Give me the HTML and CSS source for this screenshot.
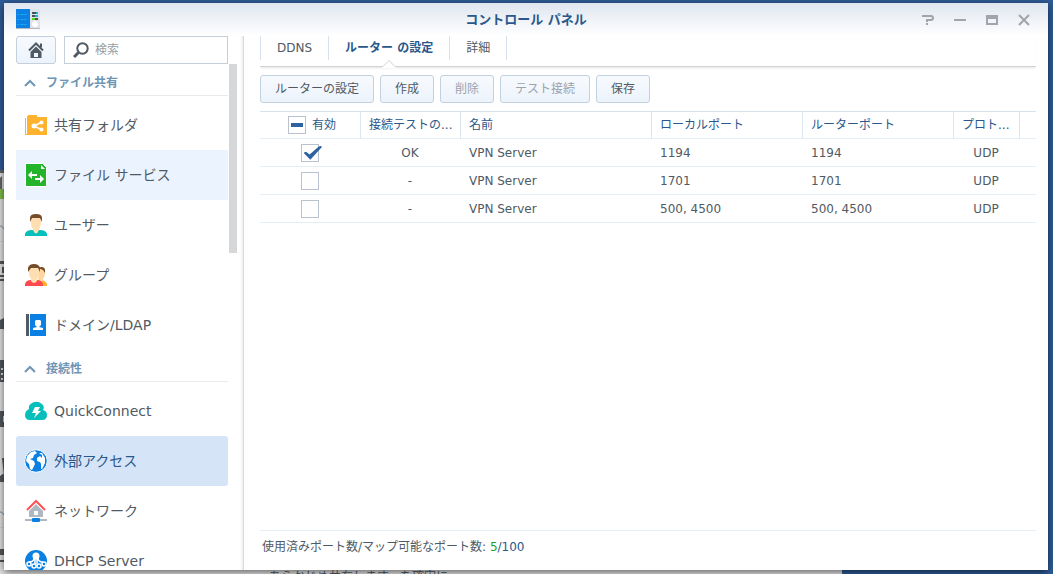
FILE: index.html
```
<!DOCTYPE html>
<html lang="ja">
<head>
<meta charset="utf-8">
<title>コントロール パネル</title>
<link rel="stylesheet" href="styles.css">
</head>
<body>
<div class="backdrop" aria-hidden="true">
  <div class="back-page">
    <svg class="back-icons" width="4" height="400" viewBox="0 0 4 400">
      <path fill="#62676d" d="M0 0h4v3H0zM0 8l2-2v14H0z"/><path fill="#80be4a" d="M0 19h4v10H0z"/>
      <path d="M0 56q2-1 4 3M0 342q2-1 4 3" fill="none" stroke="#7893ab"/>
      <path fill="#d4d4d4" d="M0 71h4v1H0zM0 357h4v1H0z"/>
      <path fill="#53585e" d="M0 91h4v3H0zM2 97h2v6H2zM0 105h4v2H0zM0 109h4v2H0zM0 150l4-2v11H0zM0 190h4v22H0zM0 241h4v16H0zM2 288h2v15l-4 3v6h4v-6zM0 379h4v6H0zM0 390h4v2H0z"/>
      <path fill="#ddd" d="M1 198h2v2H1zM1 203h2v2H1zM1 208h2v2H1zM3 246h1v6H3z"/>
    </svg>
    <p class="back-text">あらかじめ共有します、を確実に</p>
  </div>
</div>
<main class="window">
  <header class="titlebar">
    <svg class="app-icon" width="24" height="21" viewBox="0 0 24 21">
      <path fill="#b5bac0" d="M0 18h24v2H0z"/><path fill="#0d80e3" d="M0 0h14v19H0z"/><path fill="#dfe2e6" d="M14 0h10v19H14z"/>
      <path d="M1 5.500h2M4 5.500h7M1 10.500h2M4 10.500h7M1 15.500h2M4 15.500h7" stroke="#16a4ee"/>
      <path d="M16 4h6M16 7h6M16 10h6" stroke="#47515b" stroke-width="2"/><path d="M20 4h2M19 7h3" stroke="#12b8d4" stroke-width="2"/><path d="M16 10h3" stroke="#53d719" stroke-width="2"/>
      <circle cx="19" cy="15" r="3" fill="#fff"/>
    </svg>
    <h1 class="title">コントロール パネル</h1>
    <div class="window-tools">
      <button class="tool" aria-label="ヘルプ"><svg width="12" height="12" viewBox="0 0 12 12" fill="none" stroke="#a0a5ac" stroke-width="2"><path d="M0 2h9q2 0 2 2t-2 2H5v2M5 9v2" /></svg></button>
      <button class="tool" aria-label="最小化"><svg width="12" height="12" viewBox="0 0 12 12"><path d="M0 5h12v2H0z" fill="#a0a5ac"/></svg></button>
      <button class="tool" aria-label="最大化"><svg width="12" height="12" viewBox="0 0 12 12"><path d="M0 1h12v10H0zM2 5v4h8V5z" fill="#a0a5ac" fill-rule="evenodd"/></svg></button>
      <button class="tool" aria-label="閉じる"><svg width="12" height="12" viewBox="0 0 12 12"><path d="M1 1l10 10M11 1L1 11" stroke="#a0a5ac" stroke-width="2"/></svg></button>
    </div>
  </header>
  <div class="content">
    <aside class="sidebar">
      <div class="search-row">
        <button class="home" aria-label="ホーム"><svg width="16" height="16" viewBox="0 0 16 16"><path d="M1 8.500L8 1.500l7 7" fill="none" stroke="#505a64" stroke-width="2"/><path d="M12 1.500h2v4h-2z" fill="#505a64"/><path fill="#505a64" fill-rule="evenodd" d="M8 4.500L2.500 10v6h11v-6zM6 15v-4h4v4z"/></svg></button>
        <label class="search">
          <svg width="16" height="16" viewBox="0 0 16 16" fill="none" stroke="#505a64"><circle cx="9.500" cy="6.500" r="5.200" stroke-width="2"/><path d="M5.500 10.500L1 15" stroke-width="3"/></svg>
          <input type="search" placeholder="検索" aria-label="検索">
        </label>
      </div>
      <div class="nav-scroll">
        <nav class="nav">
          <h2 class="section"><svg width="12" height="8" viewBox="0 0 12 8"><path d="M1 7l5-5 5 5"/></svg>ファイル共有</h2>
          <ul class="items">
            <li><a class="item" href="#"><svg width="24" height="24" viewBox="0 0 24 24"><path fill="#ffb22e" d="M1 5h1v16h1V3h1v-1h9v2h10v18H1z"/><path fill="#fff" d="M2 4h1v15H2z"/><path d="M18 9l-8 4 8 4" fill="none" stroke="#fff" stroke-width="1.500"/><g fill="#fff"><circle cx="10" cy="13" r="2.500"/><circle cx="17.500" cy="9.500" r="2"/><circle cx="17.500" cy="16.500" r="2"/></g></svg>共有フォルダ</a></li>
            <li><a class="item hovered" href="#"><svg width="24" height="24" viewBox="0 0 24 24"><path fill="#24b42c" stroke="#fff" d="M1.500.5h17l4 4v19h-21z"/><path fill="#fff" d="M17 2l4 4h-4zM4 12l4-4v3h5v2H8v3zM20 16l-4 4v-3h-5v-2h5v-3z"/></svg>ファイル サービス</a></li>
            <li><a class="item" href="#"><svg width="24" height="24" viewBox="0 0 24 24"><path fill="#06bfba" d="M1 23v-2q1-4 7-4h8q6 0 7 4v2z"/><path fill="#ffdeb2" d="M7 5h10v6q-1 4-2 5v1q-3 7-6 0v-1q-2-2-2-5z"/><path fill="#754c29" d="M6 9V5q0-4 6-4t6 4v4l-2-4H8z"/></svg>ユーザー</a></li>
            <li><a class="item" href="#"><svg width="24" height="24" viewBox="0 0 24 24"><path fill="#ffb32e" d="M18 17q4 1 5 4v2h-6z"/><path fill="#ffd6a0" d="M15 5h6v7l-2 4v2l-5 1z"/><path fill="#754c29" d="M14 5q6-3 7 2v3l-2-3z"/><path fill="#ff4b50" d="M1 23v-2q1-4 6-4h6q5 0 6 4v2z"/><path fill="#ffdeb2" d="M5 5h10v6q-1 4-2 5v2q-3 4-6 0v-2q-2-2-2-5z"/><path fill="#754c29" d="M4 9V5q1-4 6-4t6 4v4l-2-4H7z"/></svg>グループ</a></li>
            <li><a class="item" href="#"><svg width="24" height="24" viewBox="0 0 24 24"><path fill="#505b66" d="M2 1h3v22H2z"/><path fill="#0a80e3" d="M6 1h16v22H6z"/><path fill="#fff" d="M12 7h4l1 1v4l-2 2 4 1v2H9v-2l4-1-2-2V8z"/></svg>ドメイン/LDAP</a></li>
          </ul>
          <h2 class="section"><svg width="12" height="8" viewBox="0 0 12 8"><path d="M1 7l5-5 5 5"/></svg>接続性</h2>
          <ul class="items">
            <li><a class="item" href="#"><svg width="24" height="24" viewBox="0 0 24 24"><path fill="#06bfba" d="M6 21q-5 0-5-5 0-4 4-6-1-4 3-6 5-3 10 1 3 3 1 6 4 1 4 5 0 5-5 5z"/><path fill="#fff" d="M11 8h5l-2 4h3l-7 7 2-5H8z"/></svg>QuickConnect</a></li>
            <li><a class="item selected" href="#" aria-current="page"><svg width="24" height="24" viewBox="0 0 24 24"><circle cx="12" cy="12" r="11.300" fill="#0a80e3" stroke="#fff"/><path fill="#fff" d="M3 7l4-4 4-1 2 2-3 2-1 3-3 1 4 2 1 3-3 6-2-1-1-5-3-3zM15 4l3 0 3 5 0 5-3 6-1 0v-5l-1-2-3-1v-3l3-2 2 2V6z"/></svg>外部アクセス</a></li>
            <li><a class="item" href="#"><svg width="24" height="24" viewBox="0 0 24 24"><path fill="#aeb8c3" fill-rule="evenodd" d="M12 5l7 7v6H5v-6zM10 12v4h4v-4z"/><path d="M3 11l9-9 9 9" fill="none" stroke="#ff5054" stroke-width="2"/><path fill="#aeb8c3" d="M1 20h22v2H1z"/><rect x="8" y="19" width="8" height="4" rx="1" fill="#0a80e3"/></svg>ネットワーク</a></li>
            <li><a class="item" href="#"><svg width="24" height="24" viewBox="0 0 24 24"><circle cx="12" cy="12" r="11" fill="#0a80e3"/><g fill="none" stroke="#fff" stroke-width="1.500"><circle cx="5" cy="15" r="2"/><circle cx="10" cy="17" r="2"/><circle cx="15" cy="17" r="2"/><circle cx="20" cy="15" r="2"/><path d="M10 9q0 4-5 4M11 9v6M13 9v6M14 9q0 4 5 4"/></g><circle cx="12" cy="7" r="3.500" fill="#fff"/></svg>DHCP Server</a></li>
          </ul>
        </nav>
        <div class="scroll-thumb"></div>
      </div>
    </aside>
    <section class="panel">
      <nav class="tabs">
        <a class="tab" href="#">DDNS</a>
        <a class="tab active" href="#" aria-current="page">ルーター の設定<svg class="notch" width="14" height="8" viewBox="0 0 14 8"><path d="M0 7l1-.5 6-6 6 6 1 .5v1H0z" fill="#fff"/><path d="M0 6.500h1l6-6 6 6h1" fill="none" stroke="#d0d1d3"/></svg></a>
        <a class="tab" href="#">詳細</a>
      </nav>
      <div class="toolbar">
        <button class="btn">ルーターの設定</button>
        <button class="btn">作成</button>
        <button class="btn" disabled>削除</button>
        <button class="btn" disabled>テスト接続</button>
        <button class="btn">保存</button>
      </div>
      <div class="grid-area">
        <table class="grid">
          <colgroup><col class="c-enabled"><col class="c-test"><col><col class="c-port"><col class="c-port"><col class="c-proto"><col class="c-end"></colgroup>
          <thead>
            <tr><th class="center"><label class="all"><input class="check partial" type="checkbox">有効</label></th><th>接続テストの...</th><th>名前</th><th>ローカルポート</th><th>ルーターポート</th><th>プロト...</th><th></th></tr>
          </thead>
          <tbody>
            <tr><td class="center"><input class="check" type="checkbox" checked aria-label="1194 を有効にする"></td><td class="center">OK</td><td>VPN Server</td><td>1194</td><td>1194</td><td class="center">UDP</td><td></td></tr>
            <tr><td class="center"><input class="check" type="checkbox" aria-label="1701 を有効にする"></td><td class="center">-</td><td>VPN Server</td><td>1701</td><td>1701</td><td class="center">UDP</td><td></td></tr>
            <tr><td class="center"><input class="check" type="checkbox" aria-label="500, 4500 を有効にする"></td><td class="center">-</td><td>VPN Server</td><td>500, 4500</td><td>500, 4500</td><td class="center">UDP</td><td></td></tr>
          </tbody>
        </table>
      </div>
      <footer class="status">使用済みポート数/マップ可能なポート数: <span class="total"><span class="used">5</span>/100</span></footer>
    </section>
  </div>
</main>
</body>
</html>
```
FILE: styles.css
```
* { box-sizing: border-box; }
body {
  margin: 0;
  height: 100vh;
  padding: 3px 5px 4px 4px;
  overflow: hidden;
  background: #325e9c;
  color: #505a64;
  font: 12px/18px "DejaVu Sans", "Noto Sans CJK JP", sans-serif;
}
h1, h2, p, ul { margin: 0; padding: 0; }
ul { list-style: none; }
a { color: inherit; text-decoration: none; }
button, input { font: inherit; color: inherit; }

/* Desktop behind the window */
.backdrop { position: absolute; inset: 0; z-index: -1; background: #2e5c98; overflow: hidden; }
.back-page { position: absolute; left: 0; top: 170px; bottom: 0; width: 80%; background: #e2e3e2; }
.back-icons { position: absolute; left: 0; top: 0; }
.back-text { position: absolute; left: 269px; bottom: -12px; }

/* Window */
.window {
  height: 100%;
  display: flex;
  flex-direction: column;
  overflow: hidden;
  background: linear-gradient(#dfe6ef, #fff 33px);
  box-shadow: 0 2px 8px rgba(0, 0, 0, .6);
}
.titlebar {
  flex: none;
  height: 33px;
  display: grid;
  grid-template-columns: 1fr auto 1fr;
  align-items: center;
  padding: 0 12px;
}
.title { font-size: 13px; line-height: 20px; font-weight: bold; color: #2a588c; }
.window-tools { display: flex; justify-content: flex-end; gap: 20px; padding-right: 6px; }
.tool { display: flex; padding: 0; border: 0; background: none; }
.content { flex: 1; min-height: 0; display: flex; }

/* Sidebar */
.sidebar {
  flex: none;
  width: 240px;
  padding-left: 12px;
  display: flex;
  flex-direction: column;
  border-right: 1px solid #d8dadd;
  box-shadow: inset -3px 0 3px -2px #e6e6e6;
}
.search-row { display: flex; gap: 8px; padding-right: 15px; flex: none; }
.home {
  width: 40px;
  height: 28px;
  display: grid;
  place-items: center;
  padding: 0;
  border: 1px solid #c3d0de;
  border-radius: 3px;
  background: linear-gradient(#f7fafe, #ecf3fb);
}
.search {
  flex: 1;
  min-width: 0;
  height: 28px;
  display: flex;
  align-items: center;
  gap: 6px;
  padding: 0 8px;
  border: 1px solid #c3d0dc;
  background: #fff;
}
.search svg { flex: none; }
.search input { flex: 1; min-width: 0; padding: 0; border: 0; outline: 0; background: none; }
.search input::placeholder { color: #9a9fa5; opacity: 1; }
.nav-scroll { flex: 1; min-height: 0; display: flex; gap: 1px; overflow: hidden; }
.nav { flex: none; width: 212px; }
.scroll-thumb { width: 8px; height: 189px; background: #d6d7d9; }
.section {
  height: 32px;
  display: flex;
  align-items: center;
  gap: 10px;
  padding: 6px 0 0 8px;
  border-bottom: 1px solid #e8eaec;
  font-size: 12px;
  line-height: 18px;
  font-weight: bold;
  color: #6f95b5;
}
.section svg { fill: none; stroke: #6f95b5; stroke-width: 2; }
.items { padding-top: 4px; }
.item {
  height: 50px;
  display: flex;
  align-items: center;
  gap: 6px;
  padding-left: 8px;
  border-radius: 3px;
  font-size: 14px;
  line-height: 20px;
}
.item.hovered { background: #ebf3ff; border-radius: 0; }
.item.selected { background: #d5e5f7; color: #2a588c; }

/* Panel */
.panel { flex: 1; min-width: 0; display: flex; flex-direction: column; padding: 0 12px 0 16px; }
.tabs { flex: none; height: 31px; display: flex; align-items: flex-start; border-bottom: 1px solid #d0d1d3; box-shadow: 0 2px 2px -1px #e4e4e4; }
.tab { position: relative; height: 24px; padding: 3px 16px; border-right: 1px solid #d6e1ec; }
.tab:first-child { border-left: 1px solid #d6e1ec; }
.tab.active { font-weight: bold; color: #2a588c; }
.notch { position: absolute; left: calc(50% - 7px); top: 24px; }
.toolbar { flex: none; display: flex; gap: 6px; padding: 8px 0; }
.btn {
  height: 28px;
  padding: 0 14px;
  border: 1px solid #c3d0de;
  border-radius: 3px;
  background: linear-gradient(#f7fafe, #ecf3fb);
  white-space: nowrap;
}
.btn:disabled { color: #9ba3ad; }
.grid-area { flex: 1; min-height: 0; }
.grid { width: 100%; table-layout: fixed; border-collapse: separate; border-spacing: 0; }
.c-enabled { width: 101px; }
.c-test { width: 100px; }
.c-port { width: 151px; }
.c-proto { width: 66px; }
.c-end { width: 16px; }
.grid th, .grid td {
  height: 28px;
  padding: 0 8px;
  overflow: hidden;
  text-overflow: ellipsis;
  white-space: nowrap;
  text-align: left;
  border-bottom: 1px solid #e6eef5;
}
.grid th { padding-right: 4px; border-top: 1px solid #d6e2ec; border-right: 1px solid #dce6f0; font-weight: normal; color: #2a588c; }
.grid th:last-child { border-right: 0; }
.grid td { padding-right: 10px; }
.grid .center { text-align: center; }
.all { display: flex; align-items: center; justify-content: center; gap: 6px; }
.check {
  appearance: none;
  display: inline-grid;
  place-items: center;
  width: 18px;
  height: 18px;
  margin: 0;
  vertical-align: middle;
  border: 1px solid #b9c3cf;
  background: #fff;
}
.check.partial::before { content: ""; width: 12px; height: 4px; background: #2e62a0; }
.check:checked::before {
  content: "";
  width: 18px;
  height: 14px;
  margin-left: 2px;
  background: #2e62a0;
  clip-path: polygon(0 50%, 14% 42%, 34% 62%, 85% 6%, 100% 0, 100% 12%, 38% 100%);
}
.status { flex: none; height: 40px; padding: 7px 2px; border-top: 1px solid #e6eef5; }
.total { color: #2a588c; }
.used { color: #19a51e; }
```
